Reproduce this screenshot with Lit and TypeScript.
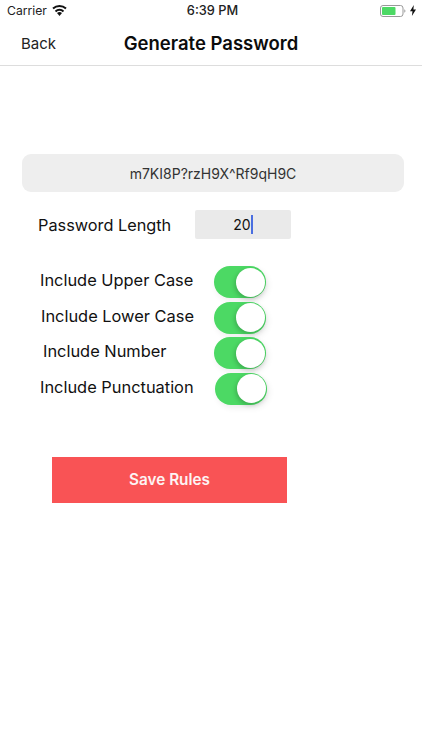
import { LitElement, html, css } from "lit";
import { customElement } from "lit/decorators.js";

const rules = [
  { label: "Include Upper Case", cls: "r1" },
  { label: "Include Lower Case", cls: "r2" },
  { label: "Include Number", cls: "r3" },
  { label: "Include Punctuation", cls: "r4" },
];

@customElement("app-root")
export class AppRoot extends LitElement {
  static styles = css`
    :host {
      display: block;
      width: 422px;
      height: 750px;
      background: #fff;
      color: #111;
      font-family: Inter, "Liberation Sans", sans-serif;
      overflow: hidden;
    }
    .status {
      height: 21px;
      padding-bottom: 1px;
      display: grid;
      grid-template-columns: 1fr auto 1fr;
      align-items: center;
      font-size: 12.2px;
      color: #222;
    }
    .status-left {
      display: flex;
      align-items: center;
      gap: 5px;
      padding-left: 7px;
    }
    .time { font-weight: 500; font-size: 12.8px; padding-left: 3px; }
    .status-right {
      display: flex;
      justify-content: flex-end;
      align-items: center;
      gap: 4px;
      padding-right: 6px;
    }
    .nav {
      height: 43px;
      display: grid;
      grid-template-columns: 1fr auto 1fr;
      align-items: center;
      border-bottom: 1px solid #ddd;
    }
    .back { font-size: 15px; padding-left: 21px; color: #222; }
    .title { font-size: 18.5px; font-weight: 600; color: #0c0c0c; padding-bottom: 2px; }
    .main {
      display: flex;
      flex-direction: column;
      padding: 88px 18px 0 22px;
    }
    .password {
      height: 38px;
      border-radius: 9px;
      background: #eeeeee;
      display: flex;
      align-items: center;
      justify-content: center;
      font-size: 14px;
      color: #333;
    }
    .length {
      display: flex;
      align-items: center;
      margin-top: 18px;
      padding-left: 16px;
      font-size: 16.3px;
      height: 29px;
    }
    .length-label { width: 157px; }
    .length-field {
      width: 96px;
      height: 29px;
      border-radius: 2px;
      background: #eaeaea;
      display: flex;
      align-items: center;
      justify-content: center;
      font-size: 14px;
      box-sizing: border-box;
    }
    .caret {
      display: inline-block;
      width: 2px;
      height: 19px;
      background: #4a6ee0;
    }
    .rules {
      display: flex;
      flex-direction: column;
      gap: 3.6px;
      margin-top: 27px;
    }
    .rule {
      display: flex;
      align-items: center;
      height: 32px;
      font-size: 16.4px;
    }
    .rule-label { white-space: nowrap; padding-bottom: 4px; }
    .r1 .rule-label { padding-left: 18px; width: 174px; }
    .r2 .rule-label { padding-left: 19px; width: 173px; }
    .r3 .rule-label { padding-left: 21px; width: 171px; }
    .r4 .rule-label { padding-left: 18px; width: 175px; }
    .switch {
      position: relative;
      width: 52px;
      height: 32px;
      border-radius: 16px;
      background: #4cd964;
      flex: none;
      box-shadow: 2px 3px 6px rgba(0, 0, 0, 0.07);
    }
    .knob {
      position: absolute;
      right: 1.5px;
      top: 1.5px;
      width: 29px;
      height: 29px;
      border-radius: 50%;
      background: #fff;
      box-shadow: -1px 2px 5px rgba(0, 0, 0, 0.22);
    }
    .save {
      margin: 52px 0 0 30px;
      width: 235px;
      height: 46px;
      background: #f95355;
      color: #fdf3f3;
      font: 600 15.3px Inter, "Liberation Sans", sans-serif;
      border: none;
      padding: 0;
    }
  `;

  render() {
    return html`
      <div class="status">
        <div class="status-left">
          <span>Carrier</span>
          <svg width="15" height="11" viewBox="0 0 15 11" aria-hidden="true">
            <path d="M7.5 11 L5 8 A3.8 3.8 0 0 1 10 8 Z" fill="#111" />
            <path d="M3.5 6.4 A6 6 0 0 1 11.5 6.4" fill="none" stroke="#111" stroke-width="2" />
            <path d="M1 3.5 A9.8 9.8 0 0 1 14 3.5" fill="none" stroke="#111" stroke-width="2" />
          </svg>
        </div>
        <span class="time">6:39 PM</span>
        <div class="status-right">
          <svg width="26" height="12" viewBox="0 0 26 12" aria-hidden="true">
            <rect x="0.5" y="0.5" width="22.5" height="11" rx="2.5" fill="#fff" stroke="#999" />
            <rect x="2" y="2" width="13.5" height="8" rx="1" fill="#4cd964" />
            <path d="M24.3 4.2 a2 2 0 0 1 0 3.6 Z" fill="#999" />
          </svg>
          <svg width="6" height="11" viewBox="0 0 6 11" aria-hidden="true">
            <path d="M3.8 0 L0 6.3 H2.5 L1.9 11 L6 4.4 H3.4 Z" fill="#111" />
          </svg>
        </div>
      </div>
      <div class="nav">
        <span class="back">Back</span>
        <span class="title">Generate Password</span>
        <span></span>
      </div>
      <div class="main">
        <div class="password">m7KI8P?rzH9X^Rf9qH9C</div>
        <div class="length">
          <span class="length-label">Password Length</span>
          <div class="length-field"><span>20</span><span class="caret"></span></div>
        </div>
        <div class="rules">
          ${rules.map(
            (r) => html`
              <div class="rule ${r.cls}">
                <span class="rule-label">${r.label}</span>
                <div class="switch"><div class="knob"></div></div>
              </div>
            `
          )}
        </div>
        <button class="save">Save Rules</button>
      </div>
    `;
  }
}
